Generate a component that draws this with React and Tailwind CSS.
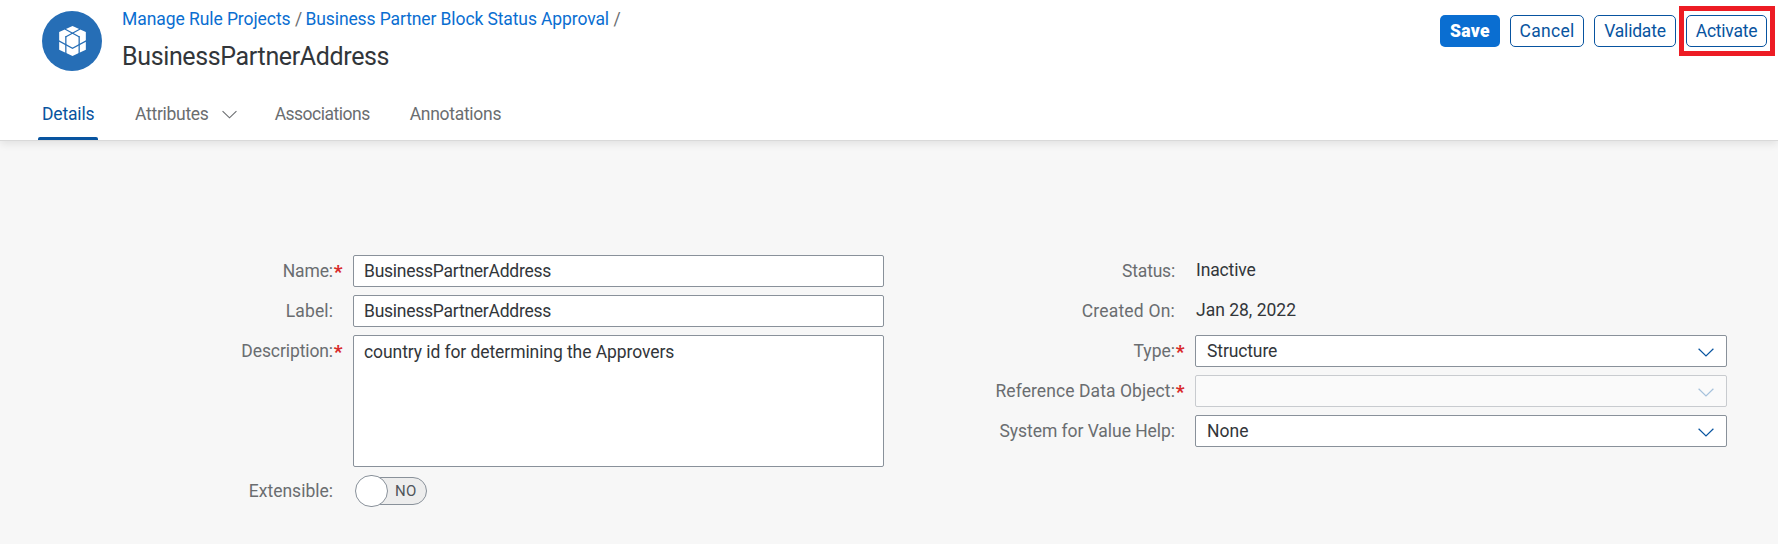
function Chevron({ className }) {
  return (
    <svg viewBox="0 0 16 9" fill="none" stroke="currentColor" strokeWidth="1.2" className={className}>
      <path d="M0.6 0.8 L8 8 L15.4 0.8" />
    </svg>
  );
}

function CubeIcon() {
  return (
    <svg viewBox="0 0 80 90" className="h-[30px] w-[27px]">
      <path d="M40 0 L80 18 V71 L40 90 L0 71 V18 Z" fill="#fff" />
      <g fill="none" stroke="#266eb6" strokeWidth="3.8">
        <path d="M17 9 L61 33 M63 9 L19 33" />
        <path d="M20 31 V86 M60 31 V86" />
        <path d="M-2 44 L40 67 L82 44" />
      </g>
    </svg>
  );
}

function Row({ label, labelClass, required, children, tall }) {
  return (
    <div className={tall ? 'flex h-[132px] items-start' : 'flex h-8 items-start'}>
      <div className="flex h-8 flex-1 items-center justify-end text-[#6a6d70]">
        <span className={labelClass}>{label}</span>
        <span className="flex h-8 w-[10px] justify-center pt-[7px] text-[19px] font-extrabold leading-5 text-[#d92b2b]">{required ? '*' : ''}</span>
      </div>
      {children}
    </div>
  );
}

function Field({ text, textClass, width }) {
  return (
    <div className={`${width} ml-[10px] flex h-8 items-center rounded-[2px] border border-[#89919a] bg-white pl-[10px] text-[#32363a]`}>
      <span className={textClass}>{text}</span>
    </div>
  );
}

function Select({ text, textClass, disabled }) {
  return (
    <div
      className={
        disabled
          ? 'ml-[10px] flex h-8 w-[532px] items-center justify-between rounded-[2px] border border-[#c8cbcf] bg-[#fafafa] pl-[11px] pr-[12px] text-[#32363a]'
          : 'ml-[10px] flex h-8 w-[532px] items-center justify-between rounded-[2px] border border-[#89919a] bg-white pl-[11px] pr-[12px] text-[#32363a]'
      }
    >
      <span className={textClass}>{text}</span>
      <Chevron className={disabled ? 'mt-0.5 h-[9px] w-4 text-[#a6c2dc]' : 'mt-0.5 h-[9px] w-4 text-[#0854a0]'} />
    </div>
  );
}

const outlined = 'relative flex h-8 items-center justify-center rounded-[5px] border border-[#0854a0] bg-white text-[#0854a0]';

export default function App() {
  return (
    <div className="flex h-[544px] w-full flex-col overflow-hidden bg-[#f7f7f7] font-[Roboto,'Liberation_Sans',sans-serif] text-[17.5px] leading-5">
      <header className="relative flex h-[141px] flex-col border-b border-[#d9d9d9] bg-white shadow-[0_3px_8px_rgba(0,0,0,0.09)]">
        <div className="flex h-[88px] justify-between pl-[42px] pr-[11px]">
          <div className="flex">
            <div className="mt-[11px] flex size-[60px] items-center justify-center rounded-full bg-[#266eb6]">
              <CubeIcon />
            </div>
            <div className="ml-[20px] flex flex-col pt-[9px]">
              <nav className="flex text-[#0a6ed1]">
                <a className="w-[173px] tracking-[-0.07px]">Manage Rule Projects</a>
                <span className="w-[10.5px] text-[#6a6d70]">/</span>
                <a className="w-[308px] tracking-[-0.11px]">Business Partner Block Status Approval</a>
                <span className="text-[#6a6d70]">/</span>
              </nav>
              <h1 className="mt-[13px] text-[25px] leading-[30px] tracking-[-0.36px] text-[#32363a]">BusinessPartnerAddress</h1>
            </div>
          </div>
          <div className="flex gap-[10px] pt-[15px]">
            <button className="flex h-8 w-[60px] items-center justify-center rounded-[5px] bg-[#0a6ed1] font-black tracking-[0.3px] text-white">Save</button>
            <button className={`${outlined} w-[74px] tracking-[0.3px]`}>Cancel</button>
            <button className={`${outlined} w-[82px] tracking-[-0.2px]`}>Validate</button>
            <button className={`${outlined} w-[81px] tracking-[-0.25px]`}>
              Activate
              <span className="absolute -bottom-[10px] -left-[8px] -right-[9px] -top-[10px] border-[5px] border-[#ed1c24]" />
            </button>
          </div>
        </div>
        <div className="flex h-[52px] pl-[38px] text-[#6a6d70]">
          <div className="flex w-[60px] flex-col justify-between pt-4 text-[#0854a0]">
            <span className="pl-1 tracking-[-0.16px]">Details</span>
            <span className="h-[3px] rounded-t-[2px] bg-[#0854a0]" />
          </div>
          <span className="ml-[37px] pt-4 tracking-[-0.28px]">Attributes</span>
          <Chevron className="ml-[13px] mt-[22px] h-[9px] w-[15px]" />
          <span className="ml-[38px] w-[135px] pt-4 tracking-[-0.5px]">Associations</span>
          <span className="pt-4 tracking-[-0.28px]">Annotations</span>
        </div>
      </header>

      <main className="flex items-start pt-[114px]">
        <section className="flex w-[884px] flex-col gap-2">
          <Row label="Name:" labelClass="tracking-[-0.1px]" required>
            <Field width="w-[531px]" text="BusinessPartnerAddress" textClass="tracking-[-0.25px]" />
          </Row>
          <Row label="Label:" labelClass="tracking-[0.1px]">
            <Field width="w-[531px]" text="BusinessPartnerAddress" textClass="tracking-[-0.25px]" />
          </Row>
          <Row label="Description:" labelClass="tracking-[-0.1px]" required tall>
            <div className="ml-[10px] h-[132px] w-[531px] rounded-[2px] border border-[#89919a] bg-white pl-[10px] pt-[6px] tracking-[-0.08px] text-[#32363a]">
              country id for determining the Approvers
            </div>
          </Row>
          <Row label="Extensible:" labelClass="tracking-normal">
            <div className="ml-[10px] flex h-8 w-[531px] items-center pl-[2px]">
              <div className="z-10 h-8 w-[33px] rounded-full border border-[#89919a] bg-white" />
              <div className="-ml-[31px] flex h-7 w-[70px] items-center rounded-full border border-[#89919a] bg-[#ededed] pl-[37px] text-[15px] tracking-[0.3px] text-[#51555a]">
                NO
              </div>
            </div>
          </Row>
        </section>
        <section className="flex w-[843px] flex-col gap-2">
          <Row label="Status:" labelClass="tracking-[-0.2px]">
            <div className="ml-[10px] w-[532px] pl-px pt-[5px] tracking-[-0.13px] text-[#32363a]">Inactive</div>
          </Row>
          <Row label="Created On:" labelClass="tracking-[0.2px]">
            <div className="ml-[10px] w-[532px] pl-px pt-[5px] text-[#32363a]">Jan 28, 2022</div>
          </Row>
          <Row label="Type:" labelClass="tracking-normal" required>
            <Select text="Structure" textClass="tracking-[-0.12px]" />
          </Row>
          <Row label="Reference Data Object:" labelClass="tracking-[0.08px]" required>
            <Select text="" disabled />
          </Row>
          <Row label="System for Value Help:" labelClass="tracking-[-0.05px]">
            <Select text="None" textClass="tracking-normal" />
          </Row>
        </section>
      </main>
    </div>
  );
}
